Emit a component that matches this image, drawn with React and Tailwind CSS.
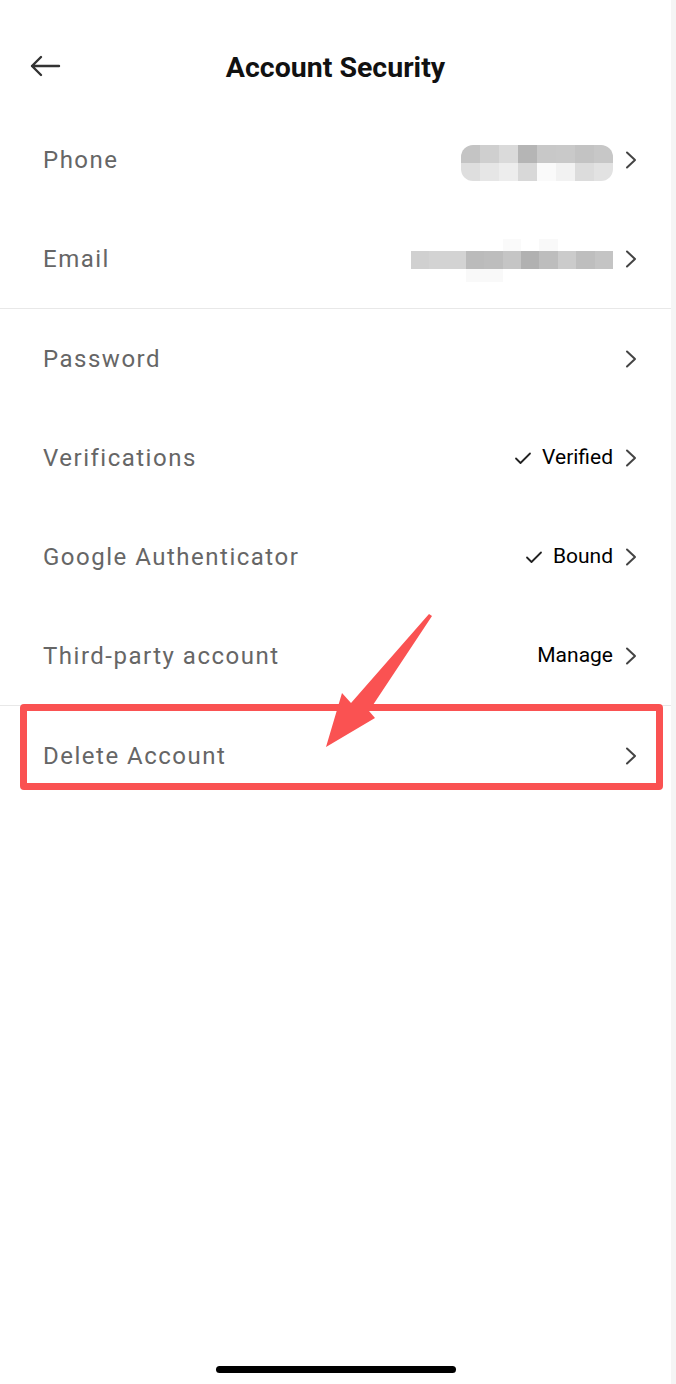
import React from "react";

const phoneTop = ["#c4c4c4", "#cfcfcf", "#dadada", "#b5b5b5", "#c8c8c8", "#c9c9c9", "#c3c3c3", "#c7c7c7"];
const phoneBottom = ["#dedede", "#e6e6e6", "#ededed", "#d8d8d8", "#fafafa", "#f2f2f2", "#dcdcdc", "#e2e2e2"];
const emailAbove = ["#fff", "#fff", "#fff", "#fff", "#fff", "#fafafa", "#fff", "#f9f9f9", "#fff", "#fff", "#fff"];
const emailRow = ["#d0d0d0", "#d3d3d3", "#d3d3d3", "#bbbbbb", "#bdbdbd", "#c5c5c5", "#b1b1b1", "#bdbdbd", "#cbcbcb", "#bebebe", "#c4c4c4"];
const emailBelow = ["#fff", "#fff", "#fff", "#f9f9f9", "#f9f9f9", "#fff", "#fff", "#fff", "#fff", "#fff", "#fff"];

function Chevron() {
  return (
    <svg width="12" height="18" viewBox="0 0 12 18" className="shrink-0">
      <path d="M2 1.5 L10 9 L2 16.5" fill="none" stroke="#444" strokeWidth="2" strokeLinecap="round" strokeLinejoin="round" />
    </svg>
  );
}

function Check() {
  return (
    <svg width="18" height="14" viewBox="0 0 18 14" className="shrink-0">
      <path d="M2 7.5 L6.5 12 L16 2.5" fill="none" stroke="#222" strokeWidth="1.8" strokeLinecap="round" strokeLinejoin="round" />
    </svg>
  );
}

function Blocks({ colors, w = "w-[18px]", h = "h-[18px]" }) {
  return (
    <div className="flex">
      {colors.map((c, i) => (
        <span key={i} className={`block ${w} ${h}`} style={{ background: c }} />
      ))}
    </div>
  );
}

function Row({ label, children }) {
  return (
    <div className="flex items-center justify-between h-[99px] pl-[43px] pr-[34px]">
      <span className="text-[24px] text-[#666] tracking-[1.5px]">{label}</span>
      <div className="flex items-center gap-[12px]">
        {children}
        <Chevron />
      </div>
    </div>
  );
}

function Value({ check, text }) {
  return (
    <span className="flex items-center gap-[10px] text-[21px] text-black">
      {check && <Check />}
      {text}
    </span>
  );
}

export default function App() {
  return (
    <div className="relative flex w-[676px] h-[1384px] bg-white overflow-hidden" style={{ fontFamily: "Roboto, 'Noto Sans', sans-serif" }}>
      <div className="flex flex-col w-[671px]">
        <header className="relative flex items-center justify-center h-[110px] pt-[26px]">
          <svg width="32" height="22" viewBox="0 0 32 22" className="absolute left-[29px] top-[55px]">
            <path d="M30 11 H3 M12 2 L3 11 L12 20" fill="none" stroke="#333" strokeWidth="2.4" strokeLinecap="round" strokeLinejoin="round" />
          </svg>
          <h1 className="text-[28.5px] font-bold text-[#111]">Account Security</h1>
        </header>

        <Row label="Phone">
          <div className="flex flex-col rounded-[12px] overflow-hidden mt-[6px] blur-[0.6px]">
            <Blocks colors={phoneTop} w="w-[19px]" />
            <Blocks colors={phoneBottom} w="w-[19px]" />
          </div>
        </Row>
        <Row label="Email">
          <div className="flex flex-col mt-[3px] blur-[0.4px]">
            <Blocks colors={emailAbove} w="w-[18.4px]" h="h-[12px]" />
            <Blocks colors={emailRow} w="w-[18.4px]" />
            <Blocks colors={emailBelow} w="w-[18.4px]" h="h-[13px]" />
          </div>
        </Row>
        <div className="h-[1px] bg-[#e8e8e8]" />

        <Row label="Password" />
        <Row label="Verifications">
          <Value check text="Verified" />
        </Row>
        <Row label="Google Authenticator">
          <Value check text="Bound" />
        </Row>
        <Row label="Third-party account">
          <Value text="Manage" />
        </Row>
        <div className="h-[1px] bg-[#e8e8e8]" />
        <Row label="Delete Account" />

        <div className="flex-1" />
        <div className="flex justify-center pb-[11px]">
          <div className="w-[240px] h-[7px] rounded-full bg-black" />
        </div>
      </div>
      <div className="w-[5px] bg-[#f5f5f5]" />

      {/* annotation */}
      <div className="absolute left-[20px] top-[704px] w-[643px] h-[86px] border-[7px] border-[#fa5252] rounded-[4px] pointer-events-none" />
      <svg width="676" height="1384" className="absolute inset-0 pointer-events-none">
        <polygon points="429,614 432,616 369,711 375,718 326,747 342,693 351,703" fill="#fa5252" />
      </svg>
    </div>
  );
}
